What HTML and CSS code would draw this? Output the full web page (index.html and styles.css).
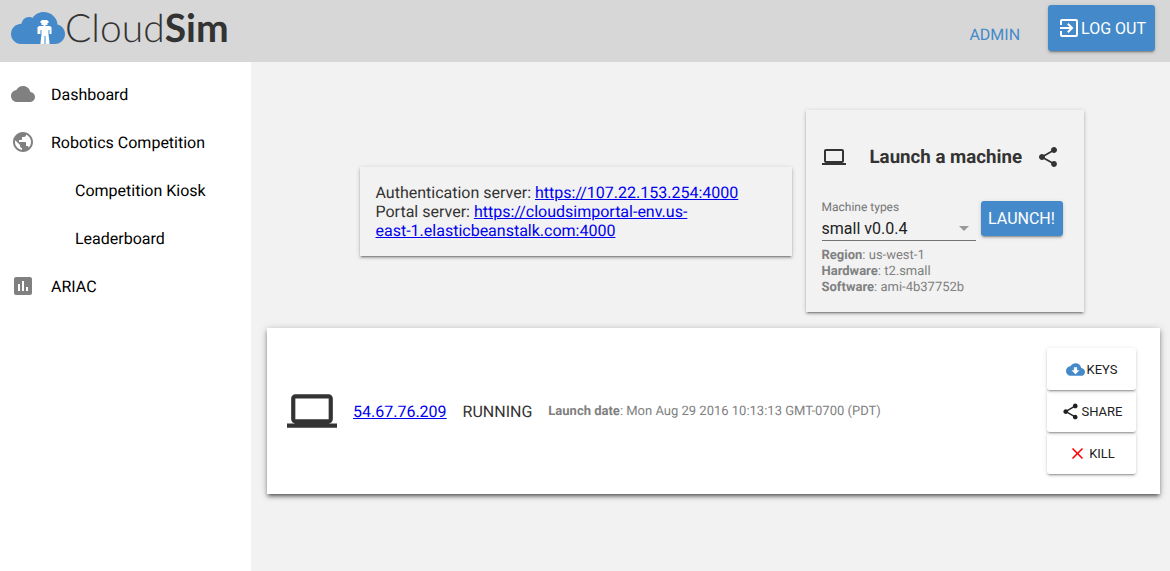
FILE: index.html
```html
<!DOCTYPE html>
<html lang="en">
<head>
<meta charset="utf-8">
<title>CloudSim</title>
<link rel="stylesheet" href="styles.css">
</head>
<body>
<svg class="sprite" aria-hidden="true">
  <symbol id="laptop" viewBox="0 0 24 24"><path d="M20 18c1.1 0 2-.9 2-2V6c0-1.1-.9-2-2-2H4c-1.1 0-2 .9-2 2v10c0 1.1.9 2 2 2H0v2h24v-2h-4zM4 6h16v10H4V6z"/></symbol>
  <symbol id="share" viewBox="0 0 24 24"><path d="M18 16.08c-.76 0-1.44.3-1.96.77L8.91 12.7c.05-.23.09-.46.09-.7s-.04-.47-.09-.7l7.05-4.11c.54.5 1.25.81 2.04.81 1.66 0 3-1.34 3-3s-1.34-3-3-3-3 1.34-3 3c0 .24.04.47.09.7L8.04 9.81C7.5 9.31 6.79 9 6 9c-1.66 0-3 1.34-3 3s1.34 3 3 3c.79 0 1.5-.31 2.04-.81l7.12 4.16c-.05.21-.08.43-.08.65 0 1.61 1.31 2.92 2.92 2.92s2.92-1.31 2.92-2.92-1.31-2.92-2.92-2.92z"/></symbol>
</svg>
<header class="topbar">
  <a class="logo" href="#" aria-label="CloudSim">
    <svg class="logo-mark" viewBox="0 0 54 32" aria-hidden="true">
      <path class="logo-cloud" d="M10 32C4.500 32 0 27.500 0 22C0 16.500 4.500 12 10.500 11.800C11 8 14 5 18 5C19.500 5 20.500 5.300 21.500 5.900C24 2.200 28 0 32.500 0C40 0 46 5.500 46.500 12.500C51 13.500 54 17.500 54 22C54 27.500 49.500 32 44 32Z"/>
      <path class="logo-robot" d="M30.500 8h6v1h1v2h-1v2h-2v1h4l2 1v7h-2v-4h-1v4l1 9v1h-4v-8h-1v8h-4v-1l1-9v-4h-1v4h-3v-7l2-1h4v-1h-2v-2h-1v-2h1z"/>
    </svg>
    <span class="logo-text">Cloud<b>Sim</b></span>
  </a>
  <nav class="account">
    <a class="admin" href="#">ADMIN</a>
    <button class="button primary logout" type="button">
      <svg class="icon" viewBox="0 0 24 24" aria-hidden="true"><path d="M10.090 15.590L11.500 17l5-5-5-5-1.410 1.410L12.670 11H3v2h9.670l-2.580 2.590zM19 3H5c-1.110 0-2 .9-2 2v4h2V5h14v14H5v-4H3v4c0 1.100.89 2 2 2h14c1.100 0 2-.9 2-2V5c0-1.100-.9-2-2-2z"/></svg>
      LOG OUT
    </button>
  </nav>
</header>
<div class="layout">
  <nav class="sidebar">
    <a class="item" href="#"><svg class="icon" viewBox="0 0 24 24" aria-hidden="true"><path d="M19.350 10.040C18.670 6.590 15.640 4 12 4 9.110 4 6.600 5.640 5.350 8.040 2.340 8.360 0 10.910 0 14c0 3.310 2.690 6 6 6h13c2.760 0 5-2.240 5-5 0-2.640-2.050-4.780-4.650-4.960z"/></svg>Dashboard</a>
    <a class="item" href="#"><svg class="icon" viewBox="0 0 24 24" aria-hidden="true"><path d="M12 2C6.480 2 2 6.480 2 12s4.480 10 10 10 10-4.480 10-10S17.520 2 12 2zm-1 17.930c-3.950-.49-7-3.850-7-7.930 0-.62.08-1.210.21-1.790L9 15v1c0 1.100.9 2 2 2v1.930zm6.900-2.540c-.26-.81-1-1.390-1.900-1.390h-1v-3c0-.55-.45-1-1-1H8v-2h2c.55 0 1-.45 1-1V7h2c1.100 0 2-.9 2-2v-.41c2.930 1.190 5 4.060 5 7.410 0 2.080-.8 3.970-2.100 5.390z"/></svg>Robotics Competition</a>
    <a class="item sub" href="#">Competition Kiosk</a>
    <a class="item sub" href="#">Leaderboard</a>
    <a class="item" href="#"><svg class="icon" viewBox="0 0 24 24" aria-hidden="true"><path d="M19 3H5c-1.100 0-2 .9-2 2v14c0 1.100.9 2 2 2h14c1.100 0 2-.9 2-2V5c0-1.100-.9-2-2-2zM9 17H7v-7h2v7zm4 0h-2V7h2v10zm4 0h-2v-4h2v4z"/></svg>ARIAC</a>
  </nav>
  <main class="main">
    <div class="overview">
      <section class="card servers">
        <div>Authentication server: <a href="#">https://107.22.153.254:4000</a></div>
        <div>Portal server: <a href="#">https://cloudsimportal-env.us-east-1.elasticbeanstalk.com:4000</a></div>
      </section>
      <section class="card launcher">
        <div class="launch-head">
          <svg class="icon" aria-hidden="true"><use href="#laptop"/></svg>
          <h3 class="launch-title">Launch a machine</h3>
          <svg class="icon" aria-hidden="true"><use href="#share"/></svg>
        </div>
        <div class="launch-form">
          <div class="field">
            <label class="field-label" for="machine">Machine types</label>
            <select class="select" id="machine"><option>small v0.0.4</option></select>
            <svg class="arrow" viewBox="0 0 10 5" aria-hidden="true"><path d="M0 0h10l-5 5z"/></svg>
          </div>
          <button class="button primary launch" type="button">LAUNCH!</button>
        </div>
        <div class="details">
          <div><b>Region</b>: us-west-1</div>
          <div><b>Hardware</b>: t2.small</div>
          <div><b>Software</b>: ami-4b37752b</div>
        </div>
      </section>
    </div>
    <section class="machine">
      <svg class="machine-icon" aria-hidden="true"><use href="#laptop"/></svg>
      <a href="#">54.67.76.209</a>
      <span>RUNNING</span>
      <span class="date"><b>Launch date</b>: Mon Aug 29 2016 10:13:13 GMT-0700 (PDT)</span>
      <div class="actions">
        <button class="button action" type="button"><svg class="small-icon keys" viewBox="0 0 24 24" aria-hidden="true"><path d="M19.350 10.040C18.670 6.590 15.640 4 12 4 9.110 4 6.600 5.640 5.350 8.040 2.340 8.360 0 10.910 0 14c0 3.310 2.690 6 6 6h13c2.760 0 5-2.240 5-5 0-2.640-2.050-4.780-4.650-4.960zM17 13l-5 5-5-5h3V9h4v4h3z"/></svg>KEYS</button>
        <button class="button action" type="button"><svg class="small-icon" aria-hidden="true"><use href="#share"/></svg>SHARE</button>
        <button class="button action" type="button"><svg class="small-icon kill" viewBox="0 0 24 24" aria-hidden="true"><path d="M19 6.410L17.590 5 12 10.590 6.410 5 5 6.410 10.590 12 5 17.590 6.410 19 12 13.410 17.590 19 19 17.590 13.410 12z"/></svg>KILL</button>
      </div>
    </section>
  </main>
</div>
</body>
</html>
```
FILE: styles.css
```css
* { box-sizing: border-box; }
body {
  margin: 0;
  min-height: 100vh;
  display: flex;
  flex-direction: column;
  background: #f2f2f2;
  color: #333;
  font: 16px/19px Roboto, sans-serif;
  text-rendering: geometricPrecision;
}
a { color: #00e; }
svg { fill: currentColor; flex: none; }
.sprite { position: absolute; width: 0; height: 0; }
.icon { width: 24px; height: 24px; }

.topbar {
  display: flex;
  justify-content: space-between;
  align-items: flex-start;
  height: 62px;
  padding: 5px 15px 0 11px;
  background: #d7d7d7;
}
.logo { display: flex; align-items: center; color: #333; text-decoration: none; }
.logo-mark { width: 54px; height: 32px; }
.logo-cloud { fill: #448aca; }
.logo-robot { fill: #fff; }
.logo-text { font: 300 39px/46px Lato, sans-serif; }
.logo-text b { font-weight: 700; }
.account { display: flex; align-items: flex-start; gap: 28px; }
.admin { margin-top: 20px; color: #448aca; text-decoration: none; }

.button {
  display: flex;
  align-items: center;
  justify-content: center;
  border: 0;
  border-radius: 3px;
  font: 16px/19px Roboto, sans-serif;
  box-shadow: 0 2px 2px rgba(0, 0, 0, .14), 0 1px 5px rgba(0, 0, 0, .12), 0 3px 1px -2px rgba(0, 0, 0, .2);
}
.primary { background: #448aca; color: #fff; }
.logout { height: 46px; padding: 0 9px; }

.layout { display: flex; flex: 1; }
.sidebar { width: 251px; flex: none; padding-top: 8px; background: #fff; }
.item {
  display: flex;
  align-items: center;
  gap: 16px;
  height: 48px;
  padding-left: 11px;
  color: #000;
  text-decoration: none;
}
.item .icon { color: #808080; }
.sub { padding-left: 75px; }

.main { flex: 1; min-width: 0; padding: 48px 10px 16px 16px; }
.overview {
  display: flex;
  justify-content: center;
  align-items: center;
  gap: 14px;
  margin-bottom: 16px;
  padding-left: 16px;
}
.card {
  padding: 16px;
  box-shadow: 0 2px 2px rgba(0, 0, 0, .2), 0 1px 5px rgba(0, 0, 0, .16), 0 3px 1px -2px rgba(0, 0, 0, .2);
}
.servers { max-width: 432px; padding-right: 72px; }
.servers div { white-space: normal; }
.servers div:first-child { white-space: nowrap; }
.launcher { width: 278px; }
.launch-head { display: flex; align-items: center; margin-top: 19px; }
.launch-title { margin: 0 14px 0 24px; line-height: 22px; }
.launch-form { display: flex; align-items: center; gap: 5px; margin-top: 30px; }
.field { position: relative; width: 154px; }
.field-label { display: block; color: #757575; font-size: 12px; line-height: 16px; }
.select {
  appearance: none;
  display: block;
  width: 100%;
  height: 26px;
  padding: 2px 0 0;
  border: 0;
  border-bottom: 1px solid #737373;
  border-radius: 0;
  background: transparent;
  color: #212121;
  font: 16px/23px Roboto, sans-serif;
}
.arrow { position: absolute; right: 7px; bottom: 10px; width: 10px; height: 5px; fill: #999; }
.launch { width: 82px; height: 35px; padding: 0; margin-bottom: 3px; }
.details { margin-top: 7px; color: #808080; font-size: 13px; line-height: 16px; }

.machine {
  display: flex;
  align-items: center;
  gap: 16px;
  padding: 20px 24px 20px 20px;
  background: #fff;
  box-shadow: 0 3px 4px rgba(0, 0, 0, .3), 0 1px 8px rgba(0, 0, 0, .2), 0 3px 3px -2px rgba(0, 0, 0, .4);
}
.machine-icon { width: 50px; height: 50px; }
.date { color: #808080; font-size: 13px; }
.actions { display: flex; flex-direction: column; margin-left: auto; width: 89px; isolation: isolate; }
.action { gap: 2px; width: 100%; height: 42px; padding: 0; background: #fff; color: #212121; font-size: 13px; }
.action:nth-child(1) { z-index: 2; }
.action:nth-child(2) { z-index: 1; }
.small-icon { width: 19px; height: 19px; }
.keys { color: #448aca; }
.kill { color: #f00; }
```
